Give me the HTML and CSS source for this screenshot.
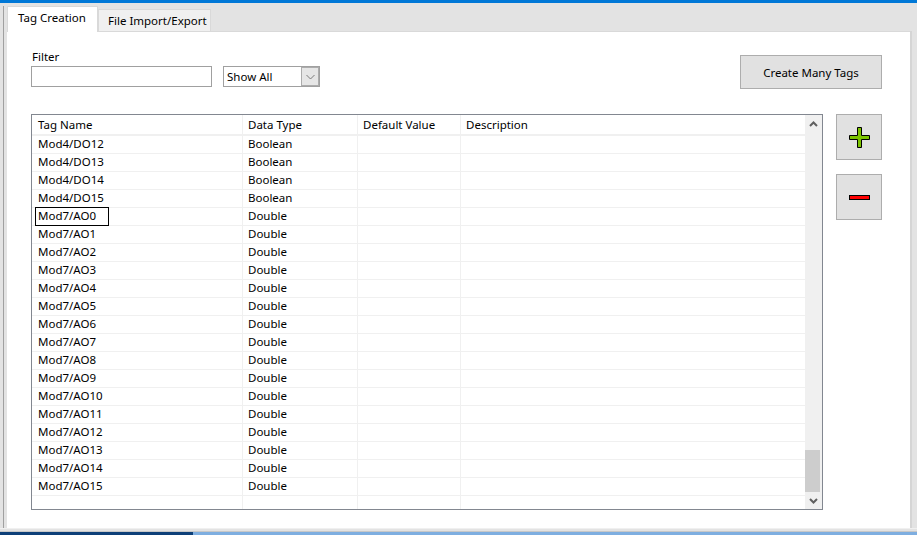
FILE: index.html
```html
<!DOCTYPE html>
<html>
<head>
<meta charset="utf-8">
<link rel="stylesheet" href="styles.css">
</head>
<body>
<div class="screen">
  <div class="topbar"></div>
  <div class="frame">
    <div class="edge-left"><div class="edge-line"></div></div>
    <div class="tabctl">
      <div class="tabstrip">
        <div class="tab active">Tag Creation</div>
        <div class="tab">File Import/Export</div>
      </div>
      <div class="page">
        <div class="toprow">
          <div class="filter">
            <div class="label">Filter</div>
            <div class="filter-controls">
              <div class="textbox"></div>
              <div class="combo">
                <span class="combo-text">Show All</span>
                <div class="combo-btn">
                  <svg width="9" height="6" viewBox="0 0 9 6"><path d="M0.5 1 L4.5 5 L8.5 1" fill="none" stroke="#7a7a7a" stroke-width="1"/></svg>
                </div>
              </div>
            </div>
          </div>
          <div class="btn create">Create Many Tags</div>
        </div>
        <div class="bottomrow">
          <div class="grid">
            <div class="grid-body">
              <div class="row header"><div class="cell">Tag Name</div><div class="cell">Data Type</div><div class="cell">Default Value</div><div class="cell">Description</div></div>
              <div class="row"><div class="cell">Mod4/DO12</div><div class="cell">Boolean</div><div class="cell"></div><div class="cell"></div></div>
              <div class="row"><div class="cell">Mod4/DO13</div><div class="cell">Boolean</div><div class="cell"></div><div class="cell"></div></div>
              <div class="row"><div class="cell">Mod4/DO14</div><div class="cell">Boolean</div><div class="cell"></div><div class="cell"></div></div>
              <div class="row"><div class="cell">Mod4/DO15</div><div class="cell">Boolean</div><div class="cell"></div><div class="cell"></div></div>
              <div class="row"><div class="cell editing"><span class="editbox">Mod7/AO0</span></div><div class="cell">Double</div><div class="cell"></div><div class="cell"></div></div>
              <div class="row"><div class="cell">Mod7/AO1</div><div class="cell">Double</div><div class="cell"></div><div class="cell"></div></div>
              <div class="row"><div class="cell">Mod7/AO2</div><div class="cell">Double</div><div class="cell"></div><div class="cell"></div></div>
              <div class="row"><div class="cell">Mod7/AO3</div><div class="cell">Double</div><div class="cell"></div><div class="cell"></div></div>
              <div class="row"><div class="cell">Mod7/AO4</div><div class="cell">Double</div><div class="cell"></div><div class="cell"></div></div>
              <div class="row"><div class="cell">Mod7/AO5</div><div class="cell">Double</div><div class="cell"></div><div class="cell"></div></div>
              <div class="row"><div class="cell">Mod7/AO6</div><div class="cell">Double</div><div class="cell"></div><div class="cell"></div></div>
              <div class="row"><div class="cell">Mod7/AO7</div><div class="cell">Double</div><div class="cell"></div><div class="cell"></div></div>
              <div class="row"><div class="cell">Mod7/AO8</div><div class="cell">Double</div><div class="cell"></div><div class="cell"></div></div>
              <div class="row"><div class="cell">Mod7/AO9</div><div class="cell">Double</div><div class="cell"></div><div class="cell"></div></div>
              <div class="row"><div class="cell">Mod7/AO10</div><div class="cell">Double</div><div class="cell"></div><div class="cell"></div></div>
              <div class="row"><div class="cell">Mod7/AO11</div><div class="cell">Double</div><div class="cell"></div><div class="cell"></div></div>
              <div class="row"><div class="cell">Mod7/AO12</div><div class="cell">Double</div><div class="cell"></div><div class="cell"></div></div>
              <div class="row"><div class="cell">Mod7/AO13</div><div class="cell">Double</div><div class="cell"></div><div class="cell"></div></div>
              <div class="row"><div class="cell">Mod7/AO14</div><div class="cell">Double</div><div class="cell"></div><div class="cell"></div></div>
              <div class="row"><div class="cell">Mod7/AO15</div><div class="cell">Double</div><div class="cell"></div><div class="cell"></div></div>
              <div class="row"><div class="cell"></div><div class="cell"></div><div class="cell"></div><div class="cell"></div></div>
            </div>
            <div class="vscroll">
              <div class="sb-btn">
                <svg width="9" height="6" viewBox="0 0 9 6"><path d="M1 5 L4.5 1.5 L8 5" fill="none" stroke="#606060" stroke-width="2"/></svg>
              </div>
              <div class="sb-track"></div>
              <div class="sb-thumb"></div>
              <div class="sb-btn">
                <svg width="9" height="6" viewBox="0 0 9 6"><path d="M1 1 L4.5 4.5 L8 1" fill="none" stroke="#606060" stroke-width="2"/></svg>
              </div>
            </div>
          </div>
          <div class="side">
            <div class="btn icon-btn">
              <svg width="21" height="21" viewBox="0 0 21 21"><path d="M8.5 0.5 H12.5 V8.5 H20.5 V12.5 H12.5 V20.5 H8.5 V12.5 H0.5 V8.5 H8.5 Z" fill="#7cc400" stroke="#000" stroke-width="1"/></svg>
            </div>
            <div class="btn icon-btn">
              <svg width="21" height="5" viewBox="0 0 21 5"><rect x="0.5" y="0.5" width="20" height="4" fill="#ff0000" stroke="#000" stroke-width="1"/></svg>
            </div>
          </div>
        </div>
      </div>
    </div>
    <div class="edge-right"></div>
  </div>
  <div class="bottomedge"></div>
  <div class="taskbar"><div class="tb-dark"></div><div class="tb-light"></div></div>
</div>
</body>
</html>
```
FILE: styles.css
```css
* { box-sizing: border-box; }
html, body { margin: 0; padding: 0; }
body {
  width: 917px;
  height: 535px;
  overflow: hidden;
  font-family: "Noto Sans", "Liberation Sans", sans-serif;
  font-size: 11.5px;
  color: #000;
  background: #e3e3e3;
}
.screen {
  display: flex;
  flex-direction: column;
  width: 917px;
  height: 535px;
}
.topbar {
  height: 3px;
  background: #0078d7;
  flex: none;
}
.frame {
  display: flex;
  height: 525px;
  flex: none;
  background: #e3e3e3;
}
.edge-left {
  width: 7px;
  flex: none;
  display: flex;
  padding: 3px 0 0 3px;
}
.edge-line {
  width: 1px;
  background: #a0a0a0;
}
.tabctl {
  width: 903px;
  flex: none;
  display: flex;
  flex-direction: column;
}
.tabstrip {
  height: 28px;
  display: flex;
  align-items: flex-end;
  flex: none;
}
.tab {
  height: 22px;
  width: 113px;
  padding: 0 0 0 9px;
  background: #f0f0f0;
  border: 1px solid #d9d9d9;
  border-bottom: none;
  line-height: 21px;
  white-space: nowrap;
}
.tab.active {
  height: 26px;
  width: 91px;
  margin-bottom: -1px;
  padding: 0 0 0 10px;
  background: #fff;
  border-color: #d9d9d9;
  line-height: 22px;
  position: relative;
  z-index: 1;
}
.page {
  height: 497px;
  background: #fff;
  border-top: 1px solid #d9d9d9;
  padding: 0 28px 18px 24px;
  display: flex;
  flex-direction: column;
}
.toprow {
  height: 82px;
  display: flex;
  justify-content: space-between;
  flex: none;
}
.filter {
  padding-top: 17px;
}
.label {
  height: 17px;
  line-height: 16px;
  padding-left: 1px;
}
.filter-controls {
  display: flex;
  gap: 11px;
}
.textbox {
  width: 181px;
  height: 21px;
  border: 1px solid #a0a0a0;
  background: #fff;
}
.combo {
  width: 97px;
  height: 21px;
  border: 1px solid #a0a0a0;
  display: flex;
  align-items: center;
  justify-content: space-between;
  padding: 0 0 0 3px;
}
.combo-text { line-height: 19px; }
.combo-btn {
  width: 18px;
  height: 19px;
  background: #e6e6e6;
  border: 1px solid #acacac;
  display: flex;
  align-items: center;
  justify-content: center;
}
.btn {
  background: #e1e1e1;
  border: 1px solid #adadad;
  display: flex;
  align-items: center;
  justify-content: center;
}
.create {
  margin-top: 23px;
  width: 142px;
  height: 34px;
}
.bottomrow {
  display: flex;
  gap: 13px;
  height: 396px;
  flex: none;
}
.grid {
  width: 792px;
  height: 396px;
  border: 1px solid #828790;
  display: flex;
}
.grid-body {
  flex: 1;
  overflow: hidden;
}
.row {
  display: grid;
  grid-template-columns: 211px 115px 103px 1fr;
  height: 18px;
  border-bottom: 1px solid #f0f0f0;
}
.row.header {
  height: 21px;
  border-bottom: 2px solid #f0f0f0;
}
.cell {
  border-right: 1px solid #f0f0f0;
  padding-left: 6px;
  line-height: 15px;
  white-space: nowrap;
}
.row .cell:nth-child(n+2) { padding-left: 5px; }
.row.header .cell { line-height: 19px; }
.cell:last-child { border-right: none; }
.cell.editing { padding-left: 3px; }
.editbox {
  display: block;
  width: 74px;
  height: 19px;
  margin-top: -1px;
  border: 1px solid #000;
  padding-left: 2px;
  line-height: 16px;
}
.vscroll {
  width: 17px;
  flex: none;
  background: #f0f0f0;
  display: flex;
  flex-direction: column;
}
.sb-btn {
  height: 17px;
  display: flex;
  align-items: center;
  justify-content: center;
  flex: none;
}
.sb-track { flex: 1; }
.sb-thumb {
  height: 42px;
  width: 15px;
  background: #cdcdcd;
  flex: none;
}
.side {
  display: flex;
  flex-direction: column;
  gap: 14px;
  width: 46px;
}
.icon-btn {
  width: 46px;
  height: 46px;
}
.edge-right {
  width: 7px;
  flex: none;
  border-left: 2px solid #d5d5d5;
  margin-top: 28px;
}
.bottomedge {
  height: 4px;
  flex: none;
  background: #e3e3e3;
  border-top: 1px solid #f0f0f0;
  border-bottom: 1px solid #c8c8c8;
}
.taskbar {
  height: 3px;
  flex: none;
  display: flex;
}
.tb-dark { width: 193px; background: #0d3f78; }
.tb-light { flex: 1; background: #7eaee0; }
```
